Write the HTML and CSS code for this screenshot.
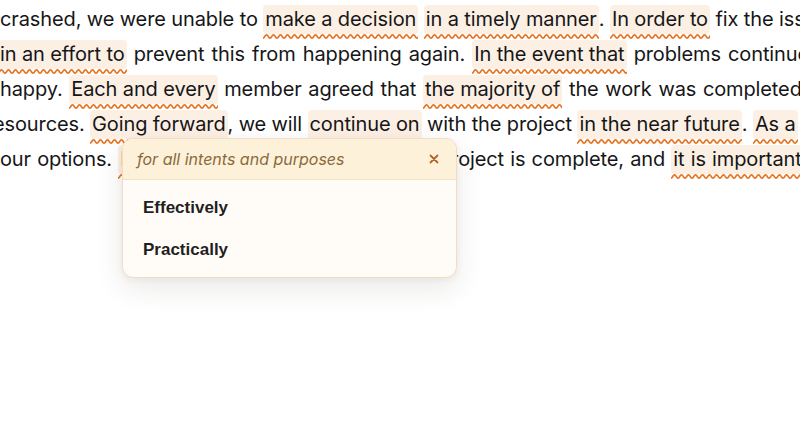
FILE: index.html
```html
<!DOCTYPE html>
<html lang="en">
<head>
<meta charset="utf-8">
<title>Wordiness suggestions</title>
<link rel="stylesheet" href="styles.css">
</head>
<body>
<div class="editor">
  <div class="line l1">crashed, we were unable to <span class="hl">make a decision</span> <span class="hl">in a timely manner</span>. <span class="hl">In order to</span> fix the issue, we</div>
  <div class="line l2"><span class="hl">in an effort to</span> prevent this from happening again. <span class="hl">In the event that</span> problems continue, we</div>
  <div class="line l3">happy. <span class="hl">Each and every</span> member agreed that <span class="hl">the majority of</span> the work was completed on</div>
  <div class="line l4">esources. <span class="hl">Going forward</span>, we will <span class="hl">continue on</span> with the project <span class="hl">in the near future</span>. <span class="hl">As a</span></div>
  <div class="line l5">our options. <span class="hl hidden">For all intents and purposes</span>, the project is complete, and <span class="hl">it is important</span> to</div>

  <div class="popup">
    <div class="popup-head">
      <span class="phrase">for all intents and purposes</span>
      <svg class="close" width="10" height="10" viewBox="0 0 10 10" aria-hidden="true"><path d="M1.5 1.5 L8.5 8.5 M8.5 1.5 L1.5 8.5" stroke="#b5632a" stroke-width="1.8" stroke-linecap="round" fill="none"/></svg>
    </div>
    <div class="popup-body">
      <div class="option">Effectively</div>
      <div class="option">Practically</div>
    </div>
  </div>
</div>
</body>
</html>
```

FILE: styles.css
```css
html, body {
  margin: 0;
  padding: 0;
  background: #ffffff;
  overflow: hidden;
}

.editor {
  position: relative;
  width: 800px;
  height: 425px;
  overflow: hidden;
  padding-top: 2px;
  box-sizing: border-box;
  font-family: "Inter", "Noto Sans", sans-serif;
  font-size: 20px;
  letter-spacing: -0.12px;
  color: #161618;
}

.line {
  white-space: nowrap;
  line-height: 35px;
  height: 35px;
}

.l1 { padding-left: 0; }
.l2 { margin-left: -2px; word-spacing: 1.6px; }
.l3 { padding-left: 0; word-spacing: 1.2px; }
.l4 { margin-left: -7px; }
.l5 { padding-left: 0; word-spacing: 0.7px; }

.hl {
  position: relative;
  display: inline-block;
  line-height: 29px;
  height: 29px;
  padding: 0 2px;
  background: #fcefe4;
  border-radius: 4px;
}

.l2 .hl,
.l3 .hl {
  word-spacing: 0;
}

.hl::after {
  content: "";
  position: absolute;
  left: 0;
  right: 0;
  bottom: -5px;
  height: 5px;
  background-image: url("data:image/svg+xml;utf8,<svg xmlns='http://www.w3.org/2000/svg' width='7' height='5' viewBox='0 0 7 5'><path d='M0 4.1 C1.75 4.1 1.75 0.9 3.5 0.9 C5.25 0.9 5.25 4.1 7 4.1' fill='none' stroke='%23e6731f' stroke-width='1.6'/></svg>");
  background-repeat: repeat-x;
  background-size: 7px 5px;
}

.hidden {
  margin-right: 8px;
}

.popup {
  position: absolute;
  left: 122px;
  top: 138px;
  width: 335px;
  box-sizing: border-box;
  border: 1px solid #f0ddc4;
  border-radius: 11px;
  background: #fffcf7;
  box-shadow: 0 10px 28px rgba(60, 40, 10, 0.10), 0 2px 6px rgba(60, 40, 10, 0.05);
  overflow: hidden;
  z-index: 2;
  word-spacing: 0;
}

.popup-head {
  display: flex;
  align-items: center;
  justify-content: space-between;
  height: 40px;
  padding: 0 17px 0 14px;
  background: #fdf1da;
  border-bottom: 1px solid #f1e0c6;
}

.phrase {
  font-family: "Inter", "Noto Sans", sans-serif;
  font-style: italic;
  font-size: 16px;
  letter-spacing: 0;
  color: #8a6a3c;
}

.close {
  display: block;
}

.popup-body {
  padding: 7px 0 6px;
}

.option {
  height: 42px;
  line-height: 42px;
  padding-left: 20px;
  font-family: "Liberation Sans", Arial, sans-serif;
  font-weight: 700;
  font-size: 17px;
  letter-spacing: 0;
  color: #1f1f1f;
}
```
